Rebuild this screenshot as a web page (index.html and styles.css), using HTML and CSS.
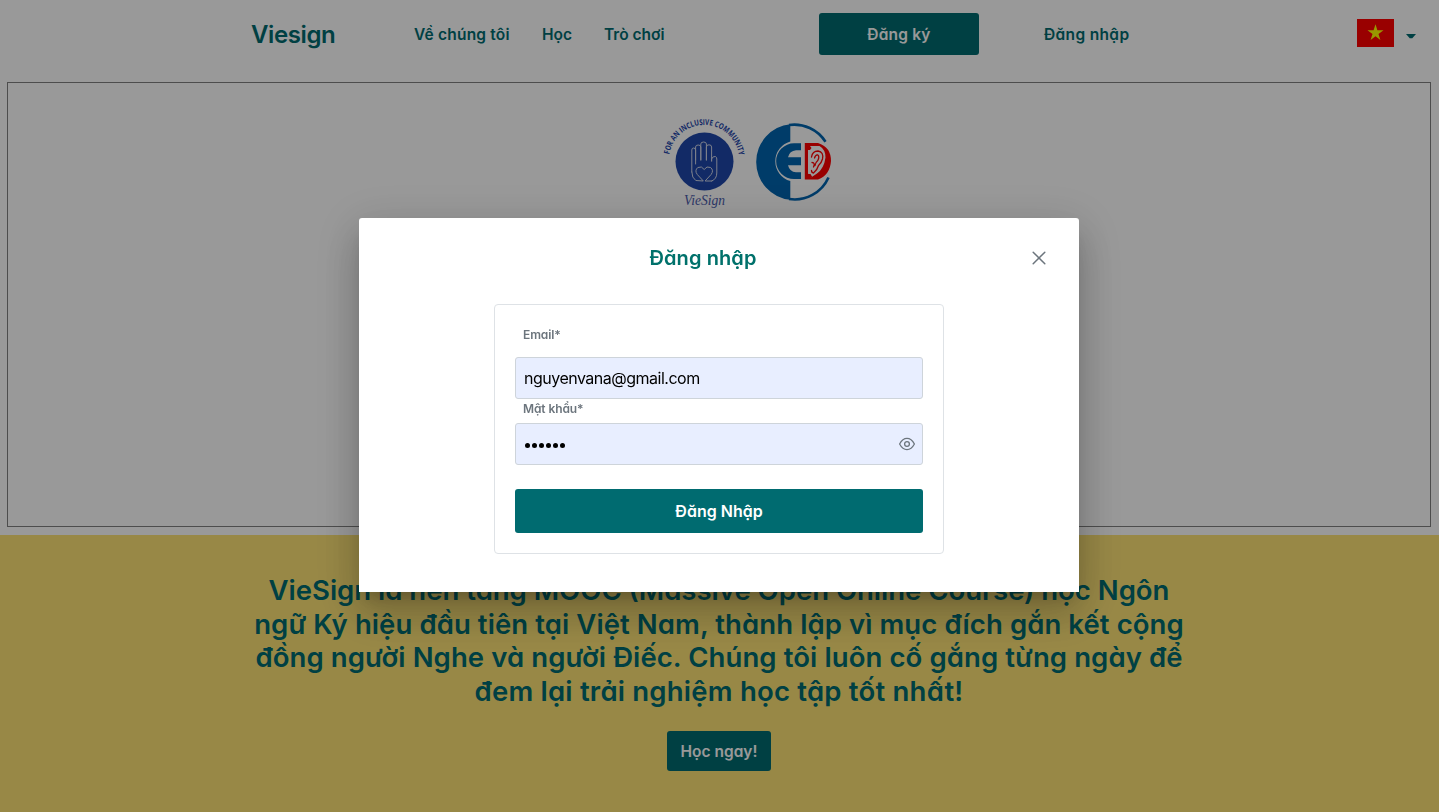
FILE: index.html
```html
<!DOCTYPE html>
<html lang="vi">
<head>
<meta charset="utf-8">
<title>Viesign</title>
<link rel="stylesheet" href="styles.css">
</head>
<body>
<header class="topbar">
  <a class="brand">Viesign</a>
  <nav class="nav"><a class="about">Về chúng tôi</a><a class="learn">Học</a><a class="games">Trò chơi</a></nav>
  <a class="btn signup"><span>Đăng ký</span></a>
  <a class="signin">Đăng nhập</a>
  <div class="language">
    <svg width="37" height="28" viewBox="0 0 37 28"><path fill="#f00" d="M0 0h37v28H0z"/><path fill="#ff0" d="m18.500 5.200 1.900 6h6.100l-5 3.700 1.900 6-4.900-3.700-4.900 3.700 1.900-6-5-3.700h6.100z"/></svg>
    <svg class="caret" width="10" height="5" viewBox="0 0 10 5"><path fill="#006b70" d="M0 0h10L6.300 4.200H3.700z"/></svg>
  </div>
</header>
<section class="frame">
  <svg class="logos" width="180" height="100" viewBox="657 114 180 100">
    <defs><path id="arc" d="M669.300 154.500A35.200 35.200 0 0 1 738.800 154.500"/></defs>
    <text class="motto"><textPath href="#arc" textLength="100" lengthAdjust="spacingAndGlyphs">FOR AN INCLUSIVE COMMUNITY</textPath></text>
    <circle cx="704.500" cy="161.500" r="29" fill="#1e46aa"/>
    <g fill="none" stroke="#d0d6e8" stroke-width="1" stroke-linecap="round" stroke-linejoin="round">
      <path d="M691.800 172v-22q0-2 1.800-2t2 2v14M695.600 160v-13q0-2 2.600-2t2.600 2v13M700.800 160v-16q0-2 2.800-2t2.800 2v16M706.400 160v-13q0-2.200 2.600-2.200t2.600 2.200v14M711.600 161v-2q1.200-3 3.800-2.500 1.400.5 1.400 2.500v14q0 6-5 8"/>
      <path d="M691.800 172q0 6 4 8.500l7.500.5-6-6.500q-3-4 .5-7 4-2 6.400 2 2.400-4 6.400-2 3.500 3 .5 7l-6 6.500 6.700 0"/>
    </g>
    <text class="script" x="684" y="204.500" textLength="41" lengthAdjust="spacingAndGlyphs">VieSign</text>
    <path fill="#0064af" d="M790.300 124.200v17.300A20.500 20.500 0 0 0 790.300 181v18.800A38 38 0 0 1 790.300 124.200z"/>
    <path fill="none" stroke="#0064af" stroke-width="2.600" d="M789 125A37 37 0 0 1 825.500 141.800M789 199A37 37 0 0 0 828.500 177.500"/>
    <path fill="#0064af" d="M801 143.300v7h-5q-6.500.5-8 7h13v8h-13q1.500 6.500 8 7h5v6.700h-7a17.800 17.800 0 0 1 0-35.700z"/>
    <path fill="#f00" fill-rule="evenodd" d="M804.800 143h13.200q13 4 13 18-1 14-13 18.500h-13.200zM808 146v27.500l3 4 6-4q7-5 8.500-16 0-8-6-11.500z"/>
    <path fill="none" stroke="#f00" stroke-width="1.300" stroke-linecap="round" d="M811.500 157q1-6 6.500-6 6 1 4.500 8-1 4-4 6.500-1.500 5-5 7.500-2-.3-2-2.500M814.500 158q1-3.500 3.300-3 2 1.500 0 5.500-2.500 2-2.800 5M812 162.500q3.500 0 1.500 4.500"/>
    <path fill="#f00" d="M808 146h2l1.500 2-1.500 2h-2zM808 174h2.500l2 3.500h-4.500z"/>
  </svg>
</section>
<section class="intro">
  <h1><span class="l1">VieSign là nền tảng MOOC (Massive Open Online Course) học Ngôn</span><span class="l2">ngữ Ký hiệu đầu tiên tại Việt Nam, thành lập vì mục đích gắn kết cộng</span><span class="l3">đồng người Nghe và người Điếc. Chúng tôi luôn cố gắng từng ngày để</span><span class="l4">đem lại trải nghiệm học tập tốt nhất!</span></h1>
  <a class="btn start"><span>Học ngay!</span></a>
</section>
<div class="mask">
  <div class="dialog" role="dialog">
    <div class="dialog-head">
      <h2><span>Đăng nhập</span></h2>
      <a class="close"><svg width="14" height="14" viewBox="0 0 14 14"><path fill="none" stroke="#6c757d" stroke-width="1.500" stroke-linecap="round" d="m1.200 1.200 11.600 11.600M12.800 1.200 1.200 12.800"/></svg></a>
    </div>
    <form class="card">
      <label class="email-label"><span>Email*</span></label>
      <div class="field"><span class="email">nguyenvana@gmail.com</span></div>
      <label class="pass-label"><span>Mật khẩu*</span></label>
      <div class="field">
        <span class="dots"><i></i><i></i><i></i><i></i><i></i><i></i></span>
        <svg width="16" height="14" viewBox="0 0 16 14"><g fill="none" stroke="#6c757d" stroke-width="1.300"><path d="M.6 7Q3.600 1.400 8 1.400T15.400 7Q12.400 12.600 8 12.600T.6 7z"/><circle cx="8" cy="7" r="2.400"/></g></svg>
      </div>
      <a class="btn submit"><span>Đăng Nhập</span></a>
    </form>
  </div>
</div>
</body>
</html>
```
FILE: styles.css
```css
* { box-sizing: border-box; }
body { margin: 0; height: 812px; overflow: hidden; background: #fff; color: #006b70; font: 600 15.5px/24px Inter, "Open Sans", sans-serif; font-feature-settings: "cv11"; white-space: nowrap; }
h1, h2 { margin: 0; font-weight: 600; }
.topbar { display: flex; align-items: center; height: 82px; padding: 0 23px 14px 251px; }
.topbar > a:not(.btn), .nav, .btn span { padding-top: 2px; }
.brand { width: 163px; font-size: 24px; letter-spacing: -.4px; }
.nav { display: flex; width: 405px; }
.about { width: 128px; letter-spacing: .2px; }
.learn { width: 62px; }
.signin { letter-spacing: .35px; }
.btn { display: flex; align-items: center; justify-content: center; border-radius: 3px; background: #006b70; color: #fff; }
.signup { width: 160px; height: 42px; margin-right: 65px; letter-spacing: .2px; }
.language { display: flex; align-items: center; gap: 12px; margin-left: auto; padding-bottom: 2px; }
.language svg { display: block; }
.caret { margin-top: 6px; }
.frame { display: flex; justify-content: center; align-items: flex-start; height: 445px; margin: 0 8px 8px 7px; padding: 31px 0 0 56px; border: 1px solid #808080; }
.motto { fill: #1e46aa; font: 700 8px "Open Sans", sans-serif; }
.script { fill: #4a5bab; font: italic 15px "Liberation Serif", serif; }
.intro { display: flex; flex-direction: column; align-items: center; height: 277px; padding: 39px 1px 0 0; background: #fee376; }
h1 { display: flex; flex-direction: column; align-items: center; font-size: 27.500px; line-height: 33.600px; }
.l2 { letter-spacing: .09px; }
.l3 { letter-spacing: .1px; }
.l4 { letter-spacing: .22px; }
.start { width: 104px; height: 40px; margin-top: 23px; }
.mask { position: fixed; inset: 0; display: flex; align-items: center; justify-content: center; padding: 0 1px 2px 0; background: rgba(0,0,0,.4); }
.dialog { width: 720px; height: 374px; border-radius: 3px 3px 0 0; background: #fff; box-shadow: 0 11px 15px -7px rgba(0,0,0,.2), 0 24px 38px 3px rgba(0,0,0,.14), 0 9px 46px 8px rgba(0,0,0,.12); }
.dialog-head { display: flex; align-items: center; height: 86px; padding: 0 24px 6px; }
h2 { flex: 1; text-align: center; font-size: 20px; color: #00716b; letter-spacing: .1px; }
.close { display: flex; width: 32px; height: 32px; align-items: center; justify-content: center; }
.card { display: flex; flex-direction: column; width: 450px; height: 250px; margin: 0 auto; padding: 20px; border: 1px solid #dee2e6; border-radius: 4px; }
label { padding-left: 8px; color: #6c757d; font-size: 12px; line-height: 20px; letter-spacing: -.1px; }
.email-label { height: 32px; }
.pass-label { height: 24px; }
.field { display: flex; align-items: center; justify-content: space-between; height: 42px; padding: 0 7px 0 8px; border: 1px solid #ced4da; border-radius: 3px; background: #e8eeff; }
.email { color: #000; font: 400 16px/24px Inter, sans-serif; font-feature-settings: normal; letter-spacing: -.5px; }
.dots { display: flex; gap: 2px; padding: 3px 0 0 1px; }
.dots i { width: 5px; height: 5px; border-radius: 50%; background: #000; }
.submit { height: 44px; margin-top: 24px; font-size: 16px; }
.submit span { padding-top: 0; }
```
